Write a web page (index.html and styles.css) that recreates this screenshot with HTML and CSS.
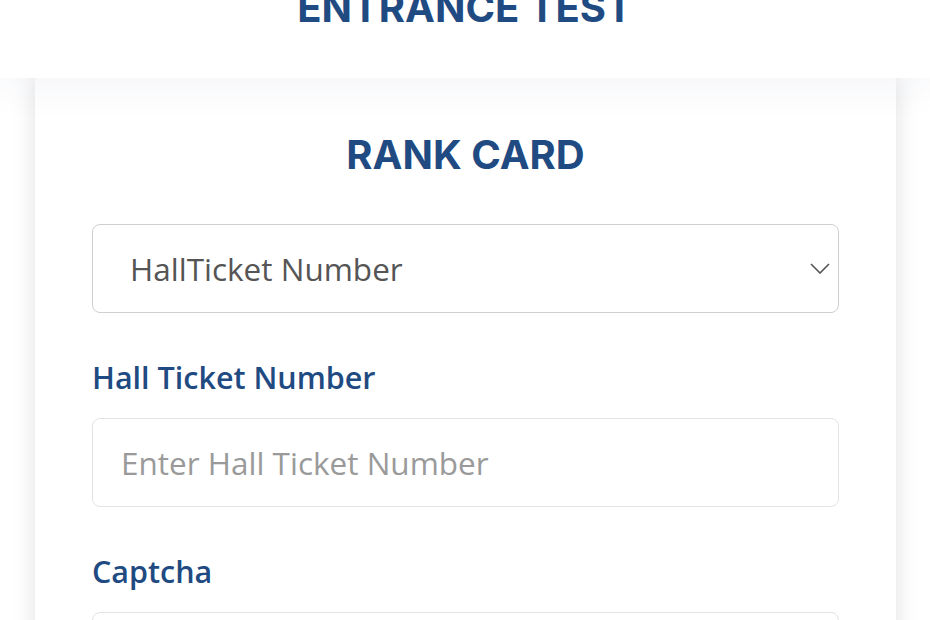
FILE: index.html
```html
<!DOCTYPE html>
<html lang="en">
<head>
    <meta charset="UTF-8">
    <meta name="viewport" content="width=device-width, initial-scale=1.0">
    <title>Rank Card</title>
    <link rel="stylesheet" href="styles.css">
</head>
<body>

<header class="site-header">
    <h1>ENTRANCE TEST</h1>
</header>

<main class="card">
    <h2 class="card-title">RANK CARD</h2>

    <form class="rank-form">
        <div class="select-wrap">
            <select class="field select-field">
                <option>HallTicket Number</option>
                <option>Registration Number</option>
            </select>
            <svg class="chevron" width="20" height="11" viewBox="0 0 20 11">
                <path d="M1 1 L10 10 L19 1" fill="none" stroke="#555" stroke-width="1.6"/>
            </svg>
        </div>

        <div class="form-group">
            <label for="htno">Hall Ticket Number</label>
            <input id="htno" class="field" type="text" placeholder="Enter Hall Ticket Number">
        </div>

        <div class="form-group">
            <label for="captcha">Captcha</label>
            <input id="captcha" class="field" type="text">
        </div>
    </form>
</main>

</body>
</html>
```

FILE: styles.css
```css
body {
    font-family: "Open Sans", Arial, sans-serif;
    background-color: #ffffff;
    color: #333;
    margin: 0;
    padding: 0;
    overflow: hidden;
}
.site-header {
    position: relative;
    z-index: 2;
    display: flow-root;
    height: 78px;
    background-color: #ffffff;
    box-shadow: 0 10px 40px rgba(30, 60, 110, 0.05);
    text-align: center;
}
.site-header h1 {
    margin: -16px 0 0;
    font-family: Inter, "Open Sans", sans-serif;
    font-size: 40px;
    line-height: 48px;
    font-weight: 700;
    color: #1f4b82;
}
.card {
    margin: 0 34px 0 35px;
    padding: 53px 57px 40px;
    background-color: #ffffff;
    box-shadow: 0 0 22px rgba(0, 0, 0, 0.12);
    min-height: 600px;
}
.card-title {
    margin: 0 0 45px;
    text-align: center;
    font-family: Inter, "Open Sans", sans-serif;
    font-size: 40px;
    line-height: 48px;
    font-weight: 700;
    color: #1f4b82;
}
.rank-form {
    display: flex;
    flex-direction: column;
    gap: 44px;
}
.select-wrap {
    position: relative;
}
.field {
    display: block;
    box-sizing: border-box;
    width: 100%;
    height: 89px;
    padding: 0 28px;
    border: 1px solid #e3e3e3;
    border-radius: 8px;
    background-color: #fff;
    font-family: "Open Sans", Arial, sans-serif;
    font-size: 31.5px;
    color: #555;
    outline: none;
}
.field::placeholder {
    color: #9a9a9a;
}
.select-field {
    appearance: none;
    -webkit-appearance: none;
    padding-left: 37px;
    border-color: #cfcfcf;
    color: #555;
}
.chevron {
    position: absolute;
    right: 9px;
    top: 39px;
    pointer-events: none;
}
.form-group {
    display: flex;
    flex-direction: column;
    gap: 21px;
}
.form-group label {
    font-size: 30.5px;
    line-height: 40px;
    font-weight: 600;
    color: #1f4b82;
}
```
